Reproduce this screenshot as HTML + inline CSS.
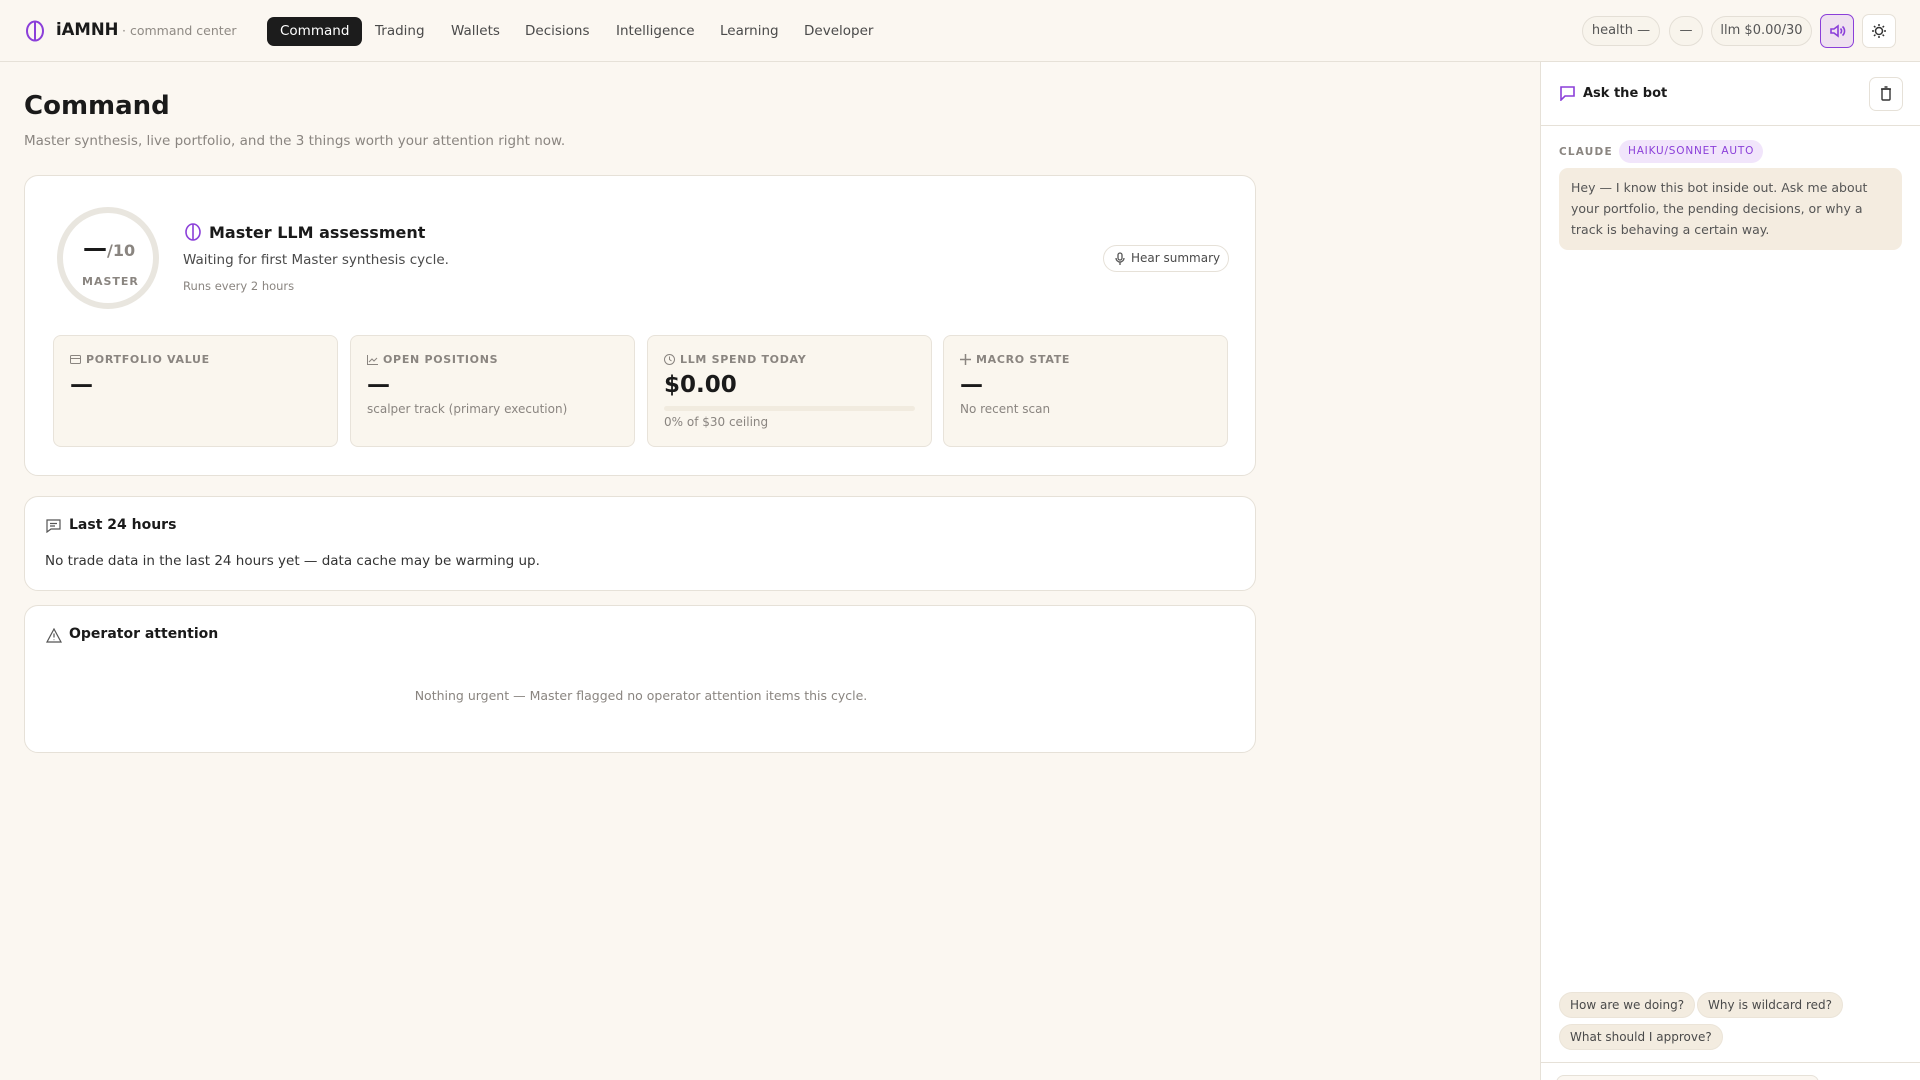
<!DOCTYPE html>
<html><head><meta charset="utf-8"><style>
*{box-sizing:border-box;margin:0;padding:0}
html,body{overflow:hidden}
body{width:1920px;height:1080px;overflow:hidden;background:#fbf7f1;font-family:"DejaVu Sans","Liberation Sans",sans-serif;color:#1a1a1a;position:relative}
.abs{position:absolute}
.hdr{left:0;top:0;width:1920px;height:62px;border-bottom:1px solid #e6e1d8;background:#fbf7f1}
.nav a{position:absolute;top:17px;height:29px;line-height:29px;font-size:13.5px;color:#4a4a4a;text-decoration:none;padding:0 13px;border-radius:7px}
.nav a.on{background:#1c1c1c;color:#fff}
.pill{position:absolute;top:16px;height:30px;line-height:28px;border:1px solid #e4dfd6;border-radius:15px;font-size:13px;color:#555;text-align:center;background:#f8f4ec}
.card{position:absolute;background:#fff;border:1px solid #e6e1d8;border-radius:14px}
.stat{position:absolute;top:335px;width:285px;height:112px;background:#faf6ee;border:1px solid #e8e3da;border-radius:8px;padding:0 16px}
.lbl{position:absolute;top:17px;left:16px;font-size:11px;font-weight:bold;letter-spacing:.7px;color:#8a8580;display:flex;align-items:center;gap:5px}
.val{position:absolute;top:36px;left:16px;font-size:23px;font-weight:bold;color:#1a1a1a}
.sub{position:absolute;left:16px;font-size:12.5px;color:#8a8580}
.side{left:1540px;top:62px;width:380px;height:1018px;background:#fff;border-left:1px solid #e6e1d8;overflow:hidden}
.chip{position:absolute;height:26px;line-height:24px;border:1px solid #ebe4d8;background:#f3ece0;border-radius:13px;font-size:12px;color:#4a4a4a;padding:0 10px;white-space:nowrap}
</style></head><body>
<div class="abs hdr"></div>
<svg class="abs" style="left:24px;top:20px" width="22" height="22" viewBox="0 0 22 22" fill="none" stroke="#8b3fd9" stroke-width="2"><ellipse cx="11" cy="11" rx="8" ry="9.5"/><path d="M11 2v18"/></svg>
<div class="abs" style="left:56px;top:20px;font-size:16.5px;font-weight:bold">iAMNH</div>
<div class="abs" style="left:122px;top:23px;font-size:12.5px;color:#8f8a84">· command center</div>
<div class="nav">
<a class="on" style="left:267px">Command</a>
<a style="left:362px">Trading</a>
<a style="left:438px">Wallets</a>
<a style="left:512px">Decisions</a>
<a style="left:603px">Intelligence</a>
<a style="left:707px">Learning</a>
<a style="left:791px">Developer</a>
</div>
<div class="pill" style="left:1582px;width:78px">health —</div>
<div class="pill" style="left:1669px;width:34px">—</div>
<div class="pill" style="left:1711px;width:101px">llm $0.00/30</div>
<div class="abs" style="left:1820px;top:14px;width:34px;height:34px;border:1px solid #8b3fd9;border-radius:7px;background:#efe1f0"><svg width="32" height="32" viewBox="0 0 32 32" fill="none" stroke="#8b3fd9" stroke-width="1.6"><path d="M10 14h3l4-3v10l-4-3h-3z"/><path d="M19.5 13.5a3.5 3.5 0 0 1 0 5M21.5 11.5a6 6 0 0 1 0 9"/></svg></div>
<div class="abs" style="left:1862px;top:14px;width:34px;height:34px;border:1px solid #e6e1d8;border-radius:7px;background:#fff"><svg width="32" height="32" viewBox="0 0 32 32" fill="none" stroke="#333" stroke-width="1.5"><circle cx="16" cy="16" r="3.5"/><path d="M16 9v2M16 21v2M9 16h2M21 16h2M11 11l1.4 1.4M19.6 19.6L21 21M11 21l1.4-1.4M19.6 12.4L21 11"/></svg></div>

<div class="abs" style="left:24px;top:91px;font-size:26px;font-weight:bold">Command</div>
<div class="abs" style="left:24px;top:133px;font-size:13.5px;color:#8a8580">Master synthesis, live portfolio, and the 3 things worth your attention right now.</div>

<div class="card" style="left:24px;top:175px;width:1232px;height:301px">
<svg class="abs" style="left:31px;top:30px" width="104" height="104"><circle cx="52" cy="52" r="48" fill="none" stroke="#e9e6df" stroke-width="6"/></svg>
<div class="abs" style="left:58px;top:58px;font-size:24px;font-weight:bold">—<span style="font-size:16px;color:#8a8580">/10</span></div>
<div class="abs" style="left:57px;top:99px;font-size:11px;font-weight:bold;letter-spacing:1px;color:#8a8580">MASTER</div>
<svg class="abs" style="left:159px;top:47px" width="18" height="18" viewBox="0 0 18 18" fill="none" stroke="#8b3fd9" stroke-width="1.6"><ellipse cx="9" cy="9" rx="7" ry="8"/><path d="M9 1v16"/></svg>
<div class="abs" style="left:184px;top:47px;font-size:16px;font-weight:bold">Master LLM assessment</div>
<div class="abs" style="left:158px;top:76px;font-size:13.5px;color:#4a4a4a">Waiting for first Master synthesis cycle.</div>
<div class="abs" style="left:158px;top:103px;font-size:11.5px;color:#8a8580">Runs every 2 hours</div>
<div class="abs" style="left:1078px;top:69px;width:126px;height:27px;border:1px solid #e6e1d8;border-radius:14px;font-size:12px;color:#4a4a4a;line-height:25px;padding-left:27px"><svg class="abs" style="left:10px;top:6px" width="12" height="14" viewBox="0 0 12 14" fill="none" stroke="#555" stroke-width="1.3"><rect x="4" y="1" width="4" height="7" rx="2"/><path d="M2 6a4 4 0 0 0 8 0M6 10v3"/></svg>Hear summary</div>
</div>

<div class="stat" style="left:53px"><div class="lbl"><svg width="11" height="9"><rect x=".5" y=".5" width="10" height="8" rx="1" fill="none" stroke="#8a8580"/><path d="M1 3.5h9" stroke="#8a8580"/></svg>PORTFOLIO VALUE</div><div class="val">—</div></div>
<div class="stat" style="left:350px"><div class="lbl"><svg width="11" height="10"><path d="M.5 0v9.5H11M2 7l3-3 2 2 3-3" fill="none" stroke="#8a8580"/></svg>OPEN POSITIONS</div><div class="val">—</div><div class="sub" style="top:66px;font-size:12px">scalper track (primary execution)</div></div>
<div class="stat" style="left:647px"><div class="lbl"><svg width="11" height="11"><circle cx="5.5" cy="5.5" r="5" fill="none" stroke="#8a8580"/><path d="M5.5 2.5v3l2 1.5" fill="none" stroke="#8a8580"/></svg>LLM SPEND TODAY</div><div class="val">$0.00</div><div class="abs" style="left:16px;top:70px;width:251px;height:5px;border-radius:3px;background:#f1ebdf"></div><div class="sub" style="top:79px;font-size:12px">0% of $30 ceiling</div></div>
<div class="stat" style="left:943px"><div class="lbl"><svg width="11" height="11"><path d="M5.5 0v11M0 5.5h11" stroke="#8a8580" stroke-width="1.5"/></svg>MACRO STATE</div><div class="val">—</div><div class="sub" style="top:66px;font-size:12px">No recent scan</div></div>

<div class="card" style="left:24px;top:496px;width:1232px;height:95px">
<svg class="abs" style="left:21px;top:22px" width="15" height="14" viewBox="0 0 15 14" fill="none" stroke="#555" stroke-width="1.2"><path d="M1 1h13v9H5l-4 3z"/><path d="M4 4.5h7M4 7h5"/></svg>
<div class="abs" style="left:44px;top:20px;font-size:14px;font-weight:bold">Last 24 hours</div>
<div class="abs" style="left:20px;top:56px;font-size:13.5px;color:#333">No trade data in the last 24 hours yet — data cache may be warming up.</div>
</div>
<div class="card" style="left:24px;top:605px;width:1232px;height:148px">
<svg class="abs" style="left:21px;top:22px" width="16" height="15" viewBox="0 0 16 15" fill="none" stroke="#555" stroke-width="1.2"><path d="M8 1L15 14H1z"/><path d="M8 5.5v4M8 11.5v.6"/></svg>
<div class="abs" style="left:44px;top:20px;font-size:14px;font-weight:bold">Operator attention</div>
<div class="abs" style="left:0;width:1232px;text-align:center;top:82px;font-size:12.5px;color:#8a8580">Nothing urgent — Master flagged no operator attention items this cycle.</div>
</div>

<div class="abs side">
<div class="abs" style="left:0;top:63px;width:380px;height:1px;background:#e6e1d8"></div>
<svg class="abs" style="left:19px;top:24px" width="15" height="15" viewBox="0 0 15 15" fill="none" stroke="#8b3fd9" stroke-width="1.6"><path d="M1 1h13v9H5l-4 4z"/></svg>
<div class="abs" style="left:42px;top:24px;font-size:13px;font-weight:bold">Ask the bot</div>
<div class="abs" style="left:328px;top:15px;width:34px;height:34px;border:1px solid #e6e1d8;border-radius:7px"><svg width="32" height="32" viewBox="0 0 32 32" fill="none" stroke="#333" stroke-width="1.4"><rect x="12" y="11" width="8" height="11" rx="1"/><path d="M11 11h10M14.5 9h3"/></svg></div>
<div class="abs" style="left:18px;top:84px;font-size:10.5px;font-weight:bold;letter-spacing:1.2px;color:#8a8580">CLAUDE</div>
<div class="abs" style="left:78px;top:78px;height:23px;line-height:23px;padding:0 9px;border-radius:12px;background:#f1e5fb;color:#8b3fd9;font-size:10.5px;letter-spacing:.8px">HAIKU/SONNET AUTO</div>
<div class="abs" style="left:18px;top:106px;width:343px;height:82px;background:#f4ece0;border-radius:9px;padding:9px 12px;font-size:12.5px;line-height:21px;color:#555">Hey — I know this bot inside out. Ask me about your portfolio, the pending decisions, or why a track is behaving a certain way.</div>
<div class="chip" style="left:18px;top:930px">How are we doing?</div>
<div class="chip" style="left:156px;top:930px">Why is wildcard red?</div>
<div class="chip" style="left:18px;top:962px">What should I approve?</div>
<div class="abs" style="left:0;top:1000px;width:380px;height:1px;background:#e6e1d8"></div>
<div class="abs" style="left:15px;top:1013px;width:263px;height:20px;border:1px solid #e6e1d8;border-bottom:none;border-radius:8px 8px 0 0;background:#fbf7f1"></div>
</div>
</body></html>
